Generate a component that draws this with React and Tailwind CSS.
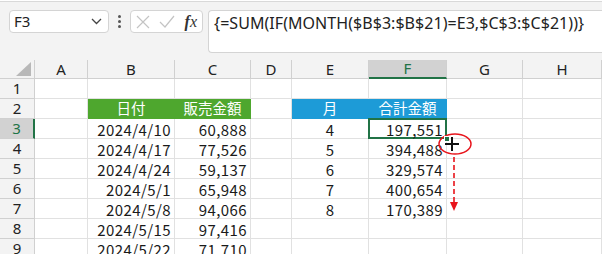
import React from "react";

const cols = ["A", "B", "C", "D", "E", "F", "G", "H"];

const rows = [
  { n: 1, cells: {} },
  { n: 2, cells: { B: ["日付", "g"], C: ["販売金額", "g"], E: ["月", "b"], F: ["合計金額", "b"] } },
  { n: 3, cells: { B: "2024/4/10", C: "60,888", E: "4", F: "197,551" } },
  { n: 4, cells: { B: "2024/4/17", C: "77,526", E: "5", F: "394,488" } },
  { n: 5, cells: { B: "2024/4/24", C: "59,137", E: "6", F: "329,574" } },
  { n: 6, cells: { B: "2024/5/1", C: "65,948", E: "7", F: "400,654" } },
  { n: 7, cells: { B: "2024/5/8", C: "94,066", E: "8", F: "170,389" } },
  { n: 8, cells: { B: "2024/5/15", C: "97,416" } },
  { n: 9, cells: { B: "2024/5/22", C: "71,710" } },
];

const cellFont = { fontFamily: '"Noto Sans CJK JP", "Noto Sans", sans-serif' };

function Cell({ col, row, value }) {
  const isHeader = Array.isArray(value);
  const selected = col === "F" && row === 3;
  if (isHeader) {
    const bg = value[1] === "g" ? "bg-[#4ea72e] border-[#4ea72e]" : "bg-[#1d9bd7] border-[#1d9bd7]";
    return (
      <div
        className={`h-[20px] border-r border-b ${bg} text-white text-[14.5px] leading-none flex items-center justify-center`}
        style={cellFont}
      >
        {value[0]}
      </div>
    );
  }
  const center = col === "E";
  return (
    <div
      className={`relative h-[20px] border-r border-b border-[#e1e1e1] bg-white text-[#1a1a1a] text-[15px] tracking-[0.4px] leading-none flex items-center ${
        center ? "justify-center" : "justify-end pr-[3px]"
      }`}
      style={cellFont}
    >
      {selected && (
        <div className="absolute left-[-1px] top-[-1px] right-[-1px] bottom-[-1px] border-2 border-[#217346] pointer-events-none" />
      )}
      {selected && (
        <div className="absolute right-[-4px] bottom-[-4px] w-[6px] h-[6px] bg-[#217346] border border-white z-10" />
      )}
      <span className="relative top-[1px]">{value || ""}</span>
    </div>
  );
}

export default function App() {
  return (
    <div className="relative w-[602px] h-[254px] overflow-hidden bg-[#f3f3f3]" style={{ fontFamily: '"Noto Sans", sans-serif' }}>
      {/* top strip */}
      <div className="h-[2px] bg-white border-b border-[#d9d9d9]" />
      {/* formula bar */}
      <div className="flex items-start pl-[9px] pt-[8px] h-[58px] gap-0">
        <div className="w-[100px] h-[23px] bg-white border border-[#d4d4d4] rounded-[4px] flex items-center justify-between pl-[4px] pr-[6px]">
          <span className="text-[15px] text-[#222] leading-none">F3</span>
          <svg width="11" height="7" viewBox="0 0 11 7">
            <path d="M1 1 L5.5 5.5 L10 1" fill="none" stroke="#444" strokeWidth="1.3" />
          </svg>
        </div>
        <div className="w-[21px] h-[23px] flex flex-col items-center justify-center gap-[2px]">
          <div className="w-[3px] h-[3px] bg-[#555] rounded-full" />
          <div className="w-[3px] h-[3px] bg-[#555] rounded-full" />
          <div className="w-[3px] h-[3px] bg-[#555] rounded-full" />
        </div>
        <div className="w-[73px] h-[23px] bg-white border border-[#d4d4d4] rounded-[4px] flex items-center justify-between pl-[5px] pr-[5px]">
          <svg width="14" height="14" viewBox="0 0 14 14">
            <path d="M1 1 L13 13 M13 1 L1 13" stroke="#c4c4c4" strokeWidth="1.2" />
          </svg>
          <svg width="16" height="13" viewBox="0 0 16 13">
            <path d="M1 7 L6 12 L15 1" fill="none" stroke="#c4c4c4" strokeWidth="1.2" />
          </svg>
          <span className="text-[16px] italic text-[#333] leading-none" style={{ fontFamily: '"Liberation Serif", serif' }}>
            <span className="font-bold">f</span>x
          </span>
        </div>
        <div className="ml-[5px] flex-1 h-[43px] bg-white border border-[#d4d4d4] rounded-l-[4px] border-r-0 pl-[5px]">
          <span className="text-[16px] text-[#222] leading-[22px] tracking-[0.05px]" style={{ fontFamily: '"Noto Sans", sans-serif' }}>
            {"{=SUM(IF(MONTH($B$3:$B$21)=E3,$C$3:$C$21))}"}
          </span>
        </div>
      </div>

      {/* sheet */}
      <div className="grid grid-cols-[35px_53px_87px_76px_41px_77px_78px_76px_1fr]">
        {/* header row */}
        <div className="relative h-[19px] bg-[#f3f3f3] border-r border-b border-[#d0d0d0]">
          <svg className="absolute right-[3px] bottom-[2px]" width="15" height="14" viewBox="0 0 15 14">
            <path d="M15 0 L15 14 L0 14 Z" fill="#b8b8b8" />
          </svg>
        </div>
        {cols.map((c) => (
          <div
            key={c}
            className={`h-[19px] border-r border-[#d0d0d0] flex items-center justify-center text-[15px] leading-none ${
              c === "F"
                ? "bg-[#d2d2d2] text-[#217346] border-b-2 border-b-[#217346]"
                : "bg-[#f3f3f3] text-[#222] border-b border-b-[#d0d0d0]"
            }`}
          >
            {c}
          </div>
        ))}
        {rows.map((r) => (
          <React.Fragment key={r.n}>
            <div
              className={`h-[20px] border-b border-[#d0d0d0] flex items-center justify-center text-[15px] leading-none ${
                r.n === 3
                  ? "bg-[#d2d2d2] text-[#217346] border-r-2 border-r-[#217346]"
                  : "bg-[#f3f3f3] text-[#222] border-r border-r-[#d0d0d0]"
              }`}
            >
              {r.n}
            </div>
            {cols.map((c) => (
              <Cell key={c} col={c} row={r.n} value={r.cells[c]} />
            ))}
          </React.Fragment>
        ))}
      </div>

      {/* annotation overlay */}
      <svg className="absolute left-0 top-0 pointer-events-none" width="602" height="254" viewBox="0 0 602 254">
        <ellipse cx="455" cy="144" rx="16" ry="10" fill="none" stroke="#e8141b" strokeWidth="1.5" />
        <path d="M452 137 L452 151 M445 144 L459 144" stroke="#111" strokeWidth="2" />
        <path d="M454 157 L454 202" stroke="#e8141b" strokeWidth="1.6" strokeDasharray="5 3" />
        <path d="M450 202 L458 202 L454 211 Z" fill="#e8141b" />
      </svg>
    </div>
  );
}
